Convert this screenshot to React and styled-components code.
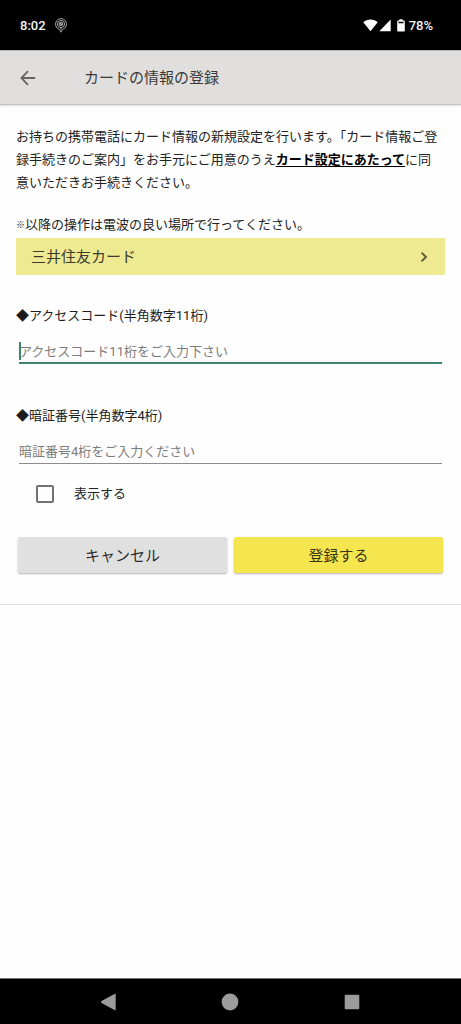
import React from "react";
import styled, { createGlobalStyle } from "styled-components";

const GlobalStyle = createGlobalStyle`
  *, *::before, *::after { box-sizing: border-box; }
  body { margin: 0; background: #fefefe; }
  button, input { font: inherit; color: inherit; }
`;

const Screen = styled.div`
  min-height: 100vh;
  display: flex;
  flex-direction: column;
  background: #fefefe;
  color: #222;
  font-family: Roboto, "Noto Sans CJK JP", sans-serif;
  font-size: 13px;
  line-height: 23px;
`;

const StatusBar = styled.div`
  height: 50px;
  padding: 0 28px 0 20px;
  display: flex;
  align-items: center;
  justify-content: space-between;
  background: #000;
  color: #f4f4f4;
  font-weight: 500;
`;

const StatusGroup = styled.div`
  display: flex;
  align-items: center;
  gap: ${(p) => p.$gap}px;
`;

const Header = styled.header`
  height: 55px;
  padding: 0 16px;
  display: flex;
  align-items: center;
  gap: 44px;
  background: #e0dfde;
  border-top: 1px solid #b4b4b4;
  border-bottom: 1px solid #c6c3c5;
  box-shadow: 0 1px 2px rgba(0, 0, 0, 0.14);
`;

const Title = styled.h1`
  margin: 0;
  padding-top: 2px;
  font-size: 15px;
  font-weight: 400;
  color: #3a3a3a;
`;

const IconButton = styled.button`
  display: grid;
  place-items: center;
  width: 24px;
  height: 24px;
  padding: 0;
  border: 0;
  background: none;
  color: ${(p) => p.$color};
`;

const Form = styled.form`
  padding: 20px 16px 31px;
  border-bottom: 1px solid #dedede;
`;

const Intro = styled.p`
  margin: 0 0 19px;
  white-space: nowrap;
`;

const TermsLink = styled.a`
  color: #000;
  font-weight: 700;
  text-decoration: underline;
  text-underline-offset: 2px;
`;

const Note = styled.p`
  margin: 0 0 2px;
`;

const NoteMark = styled.span`
  font-size: 9px;
  line-height: 1;
  vertical-align: 1px;
`;

const CardButton = styled.button`
  width: 100%;
  height: 37px;
  padding: 0 15px;
  display: flex;
  align-items: center;
  justify-content: space-between;
  border: 0;
  background: #eeea92;
  color: #3c3a2c;
  font-size: 15px;
`;

const CardName = styled.span`
  padding-top: 2px;
`;

const Field = styled.div`
  margin-top: ${(p) => p.$gap}px;
  display: flex;
  flex-direction: column;
  gap: 11px;
`;

const Label = styled.label`
  color: #1c1c1c;
`;

const InputBox = styled.div`
  position: relative;
  margin: 0 3px;
  height: 26px;
  border-bottom: ${(p) => (p.$active ? "2px solid #3f8173" : "1px solid #8c8c8c")};

  &::before {
    content: "";
    display: ${(p) => (p.$active ? "block" : "none")};
    position: absolute;
    left: 0;
    top: 4px;
    width: 2px;
    height: 18px;
    background: #3f8173;
  }
`;

const TextInput = styled.input`
  display: block;
  width: 100%;
  height: 100%;
  padding: 2px 0 0;
  border: 0;
  outline: 0;
  background: none;

  &::placeholder {
    color: #7c7c7c;
    opacity: 1;
  }
`;

const CheckRow = styled.label`
  width: fit-content;
  margin: 18px 0 0 20px;
  display: flex;
  align-items: center;
  gap: 20px;
`;

const Checkbox = styled.input`
  appearance: none;
  width: 18px;
  height: 18px;
  margin: 0;
  border: 2px solid #727272;
  border-radius: 2px;

  &:checked {
    background: #3f8173;
  }
`;

const Actions = styled.div`
  margin: 32px 2px 0;
  display: grid;
  grid-template-columns: 1fr 1fr;
  gap: 7px;
`;

const ActionButton = styled.button`
  height: 36px;
  padding: 2px 0 0;
  border: 0;
  border-radius: 2px;
  background: ${(p) => (p.$primary ? "#f5e650" : "#e0e0e0")};
  box-shadow: 0 1px 2px rgba(0, 0, 0, 0.3);
  color: ${(p) => (p.$primary ? "#3a3510" : "#2c2c2c")};
  font-size: 15px;
`;

const NavBar = styled.nav`
  height: 46px;
  margin-top: auto;
  padding: 0 48px;
  display: grid;
  grid-template-columns: repeat(3, 1fr);
  place-items: center;
  background: #000;
  border-top: 1px solid #777;
`;

const PinIcon = () => (
  <svg width="12" height="15" viewBox="0 0 12 15" fill="none" stroke="#b5b5b5" strokeWidth="0.9" aria-hidden="true">
    <path d="M6 14.2 4.5 11.4A5.5 5.5 0 1 1 7.5 11.4Z" />
    <circle cx="6" cy="6" r="3.6" />
    <circle cx="6" cy="6" r="1.8" />
    <path d="M5 7.4V5l2 2V4.6M6 9.6v2.2" />
  </svg>
);

const WifiIcon = () => (
  <svg width="15" height="13" viewBox="0 0 15 13" aria-hidden="true">
    <path d="M0.3 3.2C4.4-.3 10.6-.3 14.7 3.2L7.5 12.3Z" fill="#fff" />
  </svg>
);

const SignalIcon = () => (
  <svg width="12" height="13" viewBox="0 0 12 13" aria-hidden="true">
    <path d="M11.7 0.5V12.3H0.3Z" fill="#fff" />
  </svg>
);

const BatteryIcon = () => (
  <svg width="8" height="13" viewBox="0 0 8 13" aria-hidden="true">
    <path d="M2.3 0.3h3.4v1.2h1.1q1 0 1 1v9q0 1-1 1H1.2q-1 0-1-1v-9q0-1 1-1h1.1ZM1.5 2.8v1.4h5V2.8Z" fill="#fff" fillRule="evenodd" />
  </svg>
);

const ArrowIcon = () => (
  <svg width="16" height="16" viewBox="0 0 16 16" fill="none" stroke="currentColor" strokeWidth="1.8" aria-hidden="true">
    <path d="M15.2 8H1.8M8 1.2 1.4 8 8 14.8" />
  </svg>
);

const ChevronIcon = () => (
  <svg width="12" height="12" viewBox="0 0 12 12" fill="none" stroke="#5d593c" strokeWidth="1.9" aria-hidden="true">
    <path d="M3.5 1.6 8 6l-4.5 4.4" />
  </svg>
);

const NavIcon = ({ children }) => (
  <svg width="18" height="18" viewBox="0 0 18 18" fill="currentColor" aria-hidden="true">
    {children}
  </svg>
);

export default function App() {
  return (
    <>
      <GlobalStyle />
      <Screen lang="ja">
        <StatusBar>
          <StatusGroup $gap={9}>
            <span>8:02</span>
            <PinIcon />
          </StatusGroup>
          <StatusGroup $gap={6}>
            <StatusGroup $gap={1}>
              <WifiIcon />
              <SignalIcon />
            </StatusGroup>
            <StatusGroup $gap={4}>
              <BatteryIcon />
              <span>78%</span>
            </StatusGroup>
          </StatusGroup>
        </StatusBar>
        <Header>
          <IconButton type="button" aria-label="戻る" $color="#666">
            <ArrowIcon />
          </IconButton>
          <Title>カードの情報の登録</Title>
        </Header>
        <Form onSubmit={(e) => e.preventDefault()}>
          <Intro>
            お持ちの携帯電話にカード情報の新規設定を行います。「カード情報ご登
            <br />
            録手続きのご案内」をお手元にご用意のうえ
            <TermsLink href="#terms">カード設定にあたって</TermsLink>に同
            <br />
            意いただきお手続きください。
          </Intro>
          <Note>
            <NoteMark>※</NoteMark>以降の操作は電波の良い場所で行ってください。
          </Note>
          <CardButton type="button">
            <CardName>三井住友カード</CardName>
            <ChevronIcon />
          </CardButton>
          <Field $gap={29}>
            <Label htmlFor="access-code">◆アクセスコード(半角数字11桁)</Label>
            <InputBox $active>
              <TextInput id="access-code" inputMode="numeric" maxLength={11} placeholder="アクセスコード11桁をご入力下さい" />
            </InputBox>
          </Field>
          <Field $gap={40}>
            <Label htmlFor="pin">◆暗証番号(半角数字4桁)</Label>
            <InputBox>
              <TextInput id="pin" type="password" inputMode="numeric" maxLength={4} placeholder="暗証番号4桁をご入力ください" />
            </InputBox>
          </Field>
          <CheckRow>
            <Checkbox type="checkbox" />
            <span>表示する</span>
          </CheckRow>
          <Actions>
            <ActionButton type="button">キャンセル</ActionButton>
            <ActionButton type="submit" $primary>登録する</ActionButton>
          </Actions>
        </Form>
        <NavBar>
          <IconButton type="button" aria-label="戻る" $color="#9c9c9c">
            <NavIcon>
              <path d="M1.5 8.1 14.5 1q1.2-.5 1.2.7v14.6q0 1.2-1.2.7L1.5 9.9q-1-.9 0-1.8Z" />
            </NavIcon>
          </IconButton>
          <IconButton type="button" aria-label="ホーム" $color="#9c9c9c">
            <NavIcon>
              <circle cx="9" cy="9" r="8.4" />
            </NavIcon>
          </IconButton>
          <IconButton type="button" aria-label="最近使ったアプリ" $color="#9c9c9c">
            <NavIcon>
              <rect x="1.7" y="1.7" width="14.6" height="14.6" rx="1.2" />
            </NavIcon>
          </IconButton>
        </NavBar>
      </Screen>
    </>
  );
}
